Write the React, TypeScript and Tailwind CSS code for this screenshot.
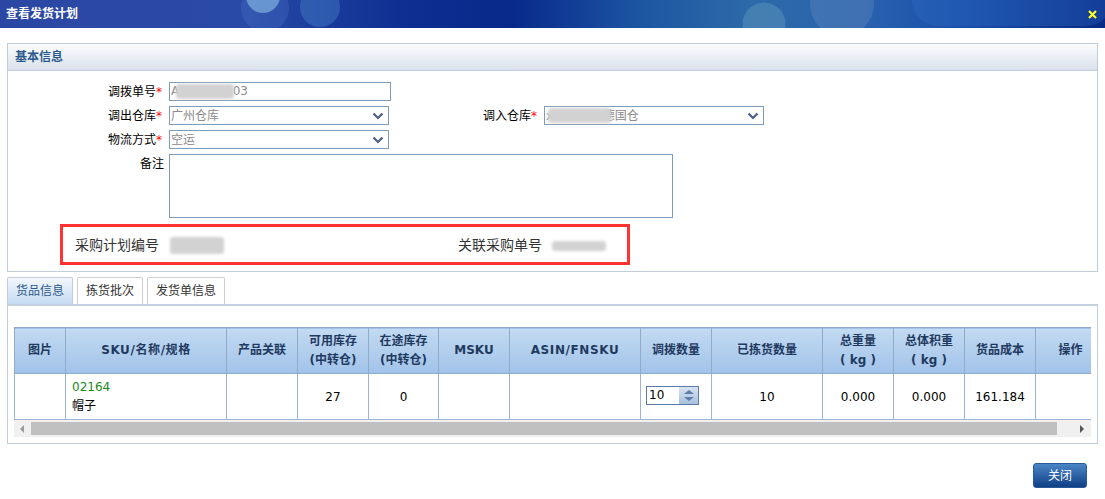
const font = { fontFamily: '"DejaVu Sans", "Noto Sans CJK SC", sans-serif' };

const columns = [
  { w: "w-[51px]", title: ["图片"] },
  { w: "w-[161px]", title: ["SKU/名称/规格"], wide: true },
  { w: "w-[71px]", title: ["产品关联"] },
  { w: "w-[71px]", title: ["可用库存", "(中转仓)"] },
  { w: "w-[70px]", title: ["在途库存", "(中转仓)"] },
  { w: "w-[71px]", title: ["MSKU"] },
  { w: "w-[131px]", title: ["ASIN/FNSKU"], wide: true },
  { w: "w-[71px]", title: ["调拨数量"] },
  { w: "w-[111px]", title: ["已拣货数量"] },
  { w: "w-[71px]", title: ["总重量", "( kg )"] },
  { w: "w-[71px]", title: ["总体积重", "( kg )"] },
  { w: "w-[71px]", title: ["货品成本"] },
  { w: "w-[70px]", title: ["操作"] },
];

function Smudge({ className }: { className: string }) {
  return <span className={`absolute rounded-[3px] bg-[#d2d2d2] blur-[1.5px] ${className}`} />;
}

function FieldLabel({ text, required = true }: { text: string; required?: boolean }) {
  return (
    <label className="pr-[5px] text-right text-xs leading-[20px] text-black">
      {text}
      {required && <span className="inline-block w-[8px] text-left text-[#f00]">*</span>}
    </label>
  );
}

function Chevron() {
  return (
    <svg width="12" height="8" viewBox="0 0 12 8" className="shrink-0">
      <path d="M1.5 1.5 6 6l4.5-4.5" fill="none" stroke="#4a5f82" strokeWidth="2.2" />
    </svg>
  );
}

function SelectBox({ width, children }: { width: string; children: React.ReactNode }) {
  return (
    <div className={`relative flex h-[19px] items-center justify-between border border-[#7f9db9] pl-[1px] pr-[4px] text-xs text-[#8a8a8a] ${width}`}>
      <span>{children}</span>
      <Chevron />
    </div>
  );
}

function Banner() {
  return (
    <div className="relative flex h-7 items-center justify-between overflow-hidden bg-[linear-gradient(90deg,#2a47a3_0%,#2a4aa8_22%,#0f2f92_36%,#08288a_46%,#1c56a2_58%,#2d6aa8_68%,#2a62ae_78%,#1a50aa_87%,#082a85_100%)] pl-[6px] pr-[8px]">
      <svg className="absolute left-0 top-0" width="1105" height="28">
        <circle cx="265" cy="8" r="24" fill="#5d8fd0" opacity="0.22" />
        <circle cx="263" cy="-4" r="17" fill="#7fb0e0" opacity="0.7" />
        <circle cx="320" cy="7" r="20" fill="#4f92d0" opacity="0.35" />
        <circle cx="764" cy="24" r="21.5" fill="#6aa0c0" opacity="0.4" />
        <circle cx="842" cy="4" r="32" fill="#6f95c0" opacity="0.3" />
        <rect x="912" y="-50" width="200" height="76" rx="26" fill="#2f6cc8" opacity="0.3" />
      </svg>
      <span className="relative text-xs font-bold text-white">查看发货计划</span>
      <svg className="relative" width="9" height="9" viewBox="0 0 9 9">
        <path d="M1 1l7 7M8 1L1 8" stroke="#ffff22" strokeWidth="2.2" />
      </svg>
    </div>
  );
}

function BasicInfo() {
  return (
    <section className="mx-[7px] mt-[15px] border border-[#c2cdda]">
      <h2 className="h-[27px] border-b border-[#c0cfe0] bg-[linear-gradient(180deg,#fbfcfd,#d9e1ec)] pl-[7px] text-xs font-bold leading-[26px] text-[#2c5a8c]">
        基本信息
      </h2>
      <div className="px-[8px] pb-[6px] pt-[11px]">
        <div className="flex flex-col gap-[5px]">
          <div className="grid h-[19px] grid-cols-[153px_auto]">
            <FieldLabel text="调拨单号" />
            <div className="relative h-[19px] w-[222px] border border-[#7f9db9] pl-[1px] text-xs leading-[17px] text-[#8a8a8a]">
              A123456003
              <Smudge className="left-[6px] top-[1px] h-[15px] w-[58px]" />
            </div>
          </div>
          <div className="grid h-[19px] grid-cols-[153px_222px_153px_auto]">
            <FieldLabel text="调出仓库" />
            <SelectBox width="w-[220px]">广州仓库</SelectBox>
            <FieldLabel text="调入仓库" />
            <SelectBox width="w-[220px]">
              xxxxxxxx德国仓
              <Smudge className="left-[3px] top-[1px] h-[15px] w-[63px]" />
            </SelectBox>
          </div>
          <div className="grid h-[19px] grid-cols-[153px_auto]">
            <FieldLabel text="物流方式" />
            <SelectBox width="w-[220px]">空运</SelectBox>
          </div>
          <div className="grid grid-cols-[153px_auto]">
            <FieldLabel text="备注" required={false} />
            <div className="h-[64px] w-[504px] border border-[#7f9db9]" />
          </div>
        </div>
        <div className="ml-[44px] mt-[6px] flex h-[41px] w-[570px] items-center border-[3px] border-[#f33] pl-[12px] text-sm text-[#333]">
          <span className="w-[383px]">
            采购计划编号
            <span className="relative ml-[11px] inline-block h-[17px] w-[54px] align-middle">
              <Smudge className="inset-0" />
            </span>
          </span>
          <span>
            关联采购单号
            <span className="relative ml-[10px] inline-block h-[10px] w-[54px] align-middle">
              <Smudge className="inset-0 bg-[#bdbdbd]" />
            </span>
          </span>
        </div>
      </div>
    </section>
  );
}

function Tabs() {
  return (
    <div className="mx-[7px] mt-[5px] flex h-[29px] gap-[4px] border-b-2 border-[#c3d0e0] text-xs">
      <div className="flex h-[27px] w-[66px] items-center justify-center rounded-t-[2px] border border-b-0 border-[#c2cdda] bg-[linear-gradient(180deg,#f3f7fc,#c5daf2)] text-[#2c5a8c]">
        货品信息
      </div>
      <div className="flex h-[27px] w-[66px] items-center justify-center rounded-t-[2px] border border-b-0 border-[#cfcfcf] bg-white text-[#333]">
        拣货批次
      </div>
      <div className="flex h-[27px] w-[78px] items-center justify-center rounded-t-[2px] border border-b-0 border-[#cfcfcf] bg-white text-[#333]">
        发货单信息
      </div>
    </div>
  );
}

function Stepper() {
  return (
    <div className="flex h-[19px] w-[53px] border border-[#5b7ba6] bg-white text-left">
      <span className="flex-1 pl-[2px] text-xs leading-[17px] text-black">10</span>
      <div className="flex w-[19px] flex-col items-center justify-center gap-[3px] bg-[linear-gradient(180deg,#d7e3f1,#a9c1dc)]">
        <span className="h-0 w-0 border-x-[5px] border-b-[4px] border-x-transparent border-b-[#5d7ea8]" />
        <span className="h-0 w-0 border-x-[5px] border-t-[4px] border-x-transparent border-t-[#5d7ea8]" />
      </div>
    </div>
  );
}

function GoodsTable() {
  const cell = "border-r border-[#9db5d0] text-center align-middle text-xs font-normal text-black";
  return (
    <div className="overflow-hidden">
      <table className="w-[1091px] table-fixed border-collapse">
        <colgroup>
          {columns.map((c, i) => (
            <col key={i} className={c.w} />
          ))}
        </colgroup>
        <thead>
          <tr className="h-[46px] border-y border-[#8fabc9] bg-[linear-gradient(180deg,#c2daf2,#a2c3e9)]">
            {columns.map((c, i) => (
              <th
                key={i}
                className={`border-r border-[#8fabc9] text-center text-xs font-bold leading-[19px] text-[#1f3a5f] ${i === 0 ? "border-l" : ""} ${c.wide ? "tracking-[0.6px]" : ""}`}
              >
                {c.title.map((line) => (
                  <div key={line}>{line}</div>
                ))}
              </th>
            ))}
          </tr>
        </thead>
        <tbody>
          <tr className="h-[46px] border-b border-[#9db5d0]">
            <td className={`${cell} border-l`} />
            <td className={`${cell} pl-[6px] !text-left leading-[19px]`}>
              <div className="text-[#1a8a1a]">02164</div>
              <div>帽子</div>
            </td>
            <td className={cell} />
            <td className={cell}>27</td>
            <td className={cell}>0</td>
            <td className={cell} />
            <td className={cell} />
            <td className={cell}>
              <div className="-mt-[2px] ml-[5px]">
                <Stepper />
              </div>
            </td>
            <td className={cell}>10</td>
            <td className={cell}>0.000</td>
            <td className={cell}>0.000</td>
            <td className={cell}>161.184</td>
            <td className={cell} />
          </tr>
        </tbody>
      </table>
    </div>
  );
}

function ScrollBar() {
  return (
    <div className="flex h-[17px] items-center bg-[#f0f0f0]">
      <span className="ml-[6px] h-0 w-0 border-y-[4px] border-r-[4px] border-y-transparent border-r-[#9a9a9a]" />
      <div className="ml-[7px] h-[13px] w-[1026px] bg-[#c0c0c0]" />
      <span className="ml-[23px] h-0 w-0 border-y-[4px] border-l-[4px] border-y-transparent border-l-[#555]" />
    </div>
  );
}

export default function App() {
  return (
    <div className="h-[499px] w-[1105px] overflow-hidden bg-white" style={font}>
      <Banner />
      <BasicInfo />
      <Tabs />
      <section className="mx-[7px] h-[138px] border-x border-b border-[#c2cdda] px-[6px] pt-[21px]">
        <GoodsTable />
        <ScrollBar />
      </section>
      <div className="mr-[18px] mt-[19px] flex justify-end">
        <button className="h-[25px] w-[54px] rounded-[3px] border border-[#2a5a9a] bg-[linear-gradient(180deg,#4a85c5,#0f3f85)] text-xs text-white">
          关闭
        </button>
      </div>
    </div>
  );
}
